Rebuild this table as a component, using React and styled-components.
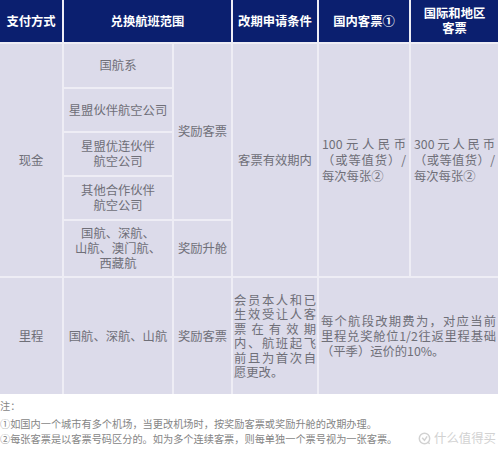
import styled, { createGlobalStyle } from "styled-components";

const GlobalStyle = createGlobalStyle`
  html, body {
    margin: 0;
    padding: 0;
    background: #fff;
  }
  body {
    font-family: "Noto Sans CJK SC", "Noto Sans", sans-serif;
  }
`;

const Page = styled.div`
  position: relative;
  width: 500px;
  height: 453px;
  overflow: hidden;
  background: #fff;
`;

const Table = styled.div`
  display: grid;
  width: 498px;
  grid-template-columns: 62px 108px 57px 84px 90px 87px;
  grid-template-rows: 42px 43px 42px 42px 42px 55px 116px;
  gap: 2px;
  background: #eeedf5;
`;

const HeadCell = styled.div`
  grid-row: 1;
  grid-column: ${({ $col }) => $col};
  background: #0b1f6f;
  color: #fff;
  font-weight: 700;
  font-size: 12.3px;
  line-height: 15px;
  display: flex;
  align-items: center;
  justify-content: center;
  text-align: center;
`;

const Cell = styled.div`
  grid-column: ${({ $col }) => $col};
  grid-row: ${({ $row }) => $row};
  background: #dcdbea;
  color: #6f6f78;
  font-size: 12.3px;
  line-height: 15px;
  display: flex;
  align-items: center;
  justify-content: center;
  text-align: center;
  padding: 0 ${({ $pad }) => $pad ?? 2}px;
`;

const Para = styled.div`
  width: 100%;
  line-height: ${({ $lh }) => $lh ?? 15}px;
`;

const Line = styled.span`
  display: block;
  text-align: ${({ $last }) => ($last ? "left" : "justify")};
  text-align-last: ${({ $last }) => ($last ? "left" : "justify")};
`;

const Notes = styled.div`
  padding-top: 4px;
  color: #858585;
  font-size: 10.2px;
  line-height: 15px;
`;

const NoteTitle = styled.div`
  margin-bottom: 3px;
`;

const Watermark = styled.div`
  position: absolute;
  right: 4px;
  bottom: 8px;
  display: flex;
  align-items: center;
  gap: 3px;
  color: #d2d2d2;
  font-size: 12.4px;
  line-height: 14px;
`;

function Justified({ lines, lh }) {
  return (
    <Para $lh={lh}>
      {lines.map((t, i) => (
        <Line key={i} $last={i === lines.length - 1}>
          {t}
        </Line>
      ))}
    </Para>
  );
}

function Logo() {
  return (
    <svg width="13" height="13" viewBox="0 0 14 14">
      <circle cx="7" cy="7" r="5.6" fill="none" stroke="#d2d2d2" strokeWidth="1.6" />
      <path d="M4.5 6.2 L7 9 L9.8 4.8" fill="none" stroke="#d2d2d2" strokeWidth="1.6" />
      <path d="M10.5 10.5 L12.5 12.8" stroke="#d2d2d2" strokeWidth="1.6" />
    </svg>
  );
}

export default function App() {
  return (
    <Page>
      <GlobalStyle />
      <Table>
        <HeadCell $col="1">支付方式</HeadCell>
        <HeadCell $col="2 / 4">兑换航班范围</HeadCell>
        <HeadCell $col="4">改期申请条件</HeadCell>
        <HeadCell $col="5">国内客票①</HeadCell>
        <HeadCell $col="6">
          国际和地区
          <br />
          客票
        </HeadCell>

        <Cell $col="1" $row="2 / 7">现金</Cell>
        <Cell $col="2" $row="2">国航系</Cell>
        <Cell $col="2" $row="3">星盟伙伴航空公司</Cell>
        <Cell $col="2" $row="4">
          星盟优连伙伴
          <br />
          航空公司
        </Cell>
        <Cell $col="2" $row="5">
          其他合作伙伴
          <br />
          航空公司
        </Cell>
        <Cell $col="2" $row="6">
          国航、深航、
          <br />
          山航、澳门航、
          <br />
          西藏航
        </Cell>
        <Cell $col="3" $row="2 / 6">奖励客票</Cell>
        <Cell $col="3" $row="6">奖励升舱</Cell>
        <Cell $col="4" $row="2 / 7">客票有效期内</Cell>
        <Cell $col="5" $row="2 / 7" $pad={3}>
          <Justified lines={["100元人民币", "（或等值货）/", "每次每张②"]} lh={16} />
        </Cell>
        <Cell $col="6" $row="2 / 7" $pad={3}>
          <Justified lines={["300元人民币", "（或等值货）/", "每次每张②"]} lh={16} />
        </Cell>

        <Cell $col="1" $row="7">里程</Cell>
        <Cell $col="2" $row="7">国航、深航、山航</Cell>
        <Cell $col="3" $row="7">奖励客票</Cell>
        <Cell $col="4" $row="7" $pad={1}>
          <Justified
            lh={14.5}
            lines={[
              "会员本人和已",
              "生效受让人客",
              "票在有效期",
              "内、航班起飞",
              "前且为首次自",
              "愿更改。",
            ]}
          />
        </Cell>
        <Cell $col="5 / 7" $row="7" $pad={2}>
          <Justified
            lines={[
              "每个航段改期费为，对应当前",
              "里程兑奖舱位1/2往返里程基础",
              "（平季）运价的10%。",
            ]}
          />
        </Cell>
      </Table>

      <Notes>
        <NoteTitle>注：</NoteTitle>
        <div>①如国内一个城市有多个机场，当更改机场时，按奖励客票或奖励升舱的改期办理。</div>
        <div>②每张客票是以客票号码区分的。如为多个连续客票，则每单独一个票号视为一张客票。</div>
      </Notes>

      <Watermark>
        <Logo />
        什么值得买
      </Watermark>
    </Page>
  );
}
